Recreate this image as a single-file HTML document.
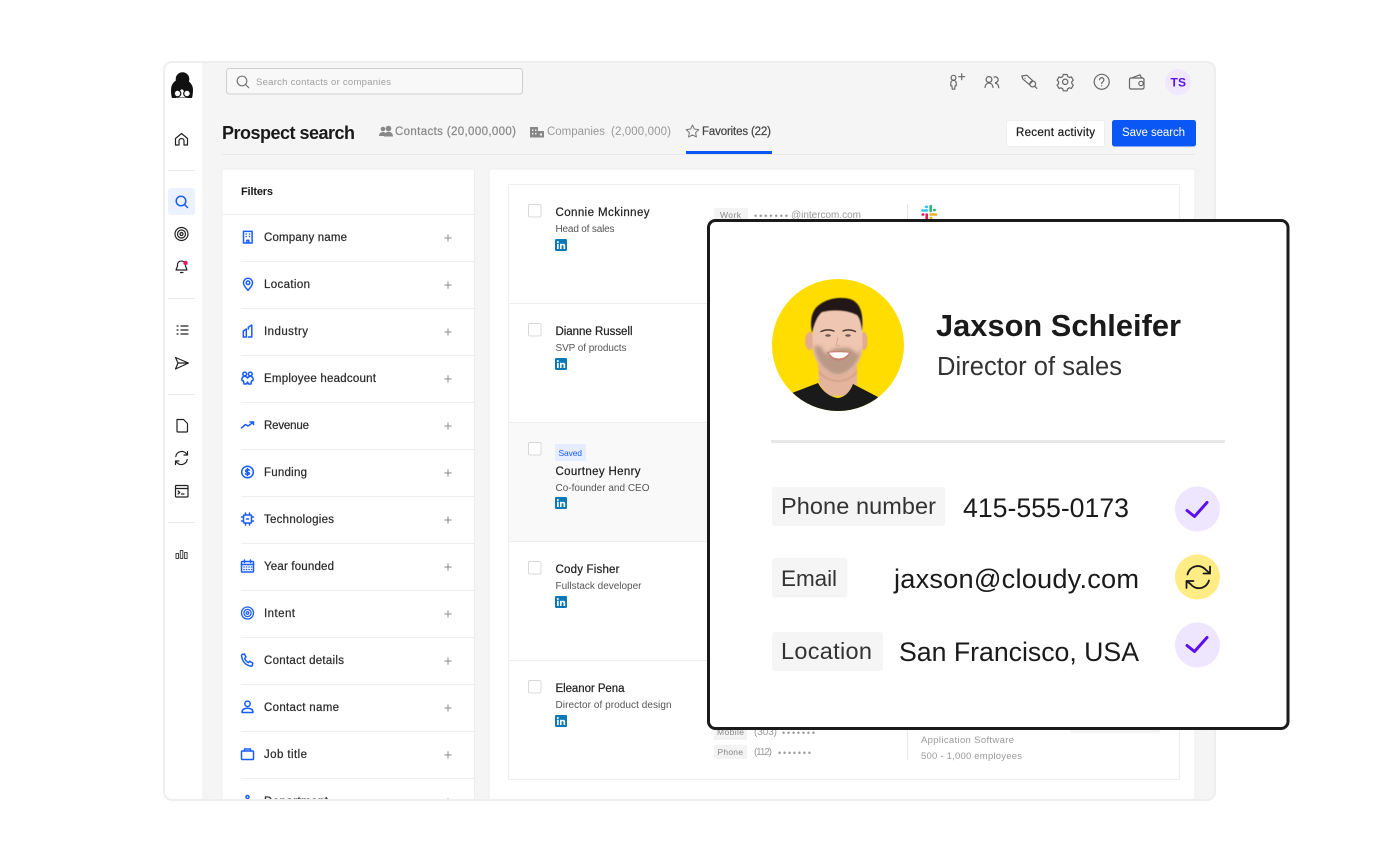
<!DOCTYPE html>
<html lang="en"><head><meta charset="utf-8"><title>Prospect search</title>
<style>
html,body{margin:0;padding:0;background:#fff}
svg{display:block}
text{font-family:"Liberation Sans",sans-serif;white-space:pre}
.m{stroke-width:.22;paint-order:stroke}
.f{font-size:11.5px;fill:#2a2a2a;stroke:#2a2a2a}
.n{font-size:11.5px;fill:#222;stroke:#222}
.s{font-size:10px;fill:#555}
.i{fill:none;stroke:#1a5cff;stroke-width:1.5;stroke-linecap:round;stroke-linejoin:round}
.k{fill:none;stroke:#222;stroke-width:1.2;stroke-linecap:round;stroke-linejoin:round}
.g{fill:none;stroke:#666;stroke-width:1.2;stroke-linecap:round;stroke-linejoin:round}
.p{fill:none;stroke:#888;stroke-width:1;stroke-linecap:round}
.l{font-size:9px;fill:#999}
</style></head><body>
<svg width="1380" height="862" viewBox="0 0 1380 862" xmlns="http://www.w3.org/2000/svg">
<defs>
<clipPath id="frame"><rect x="165" y="63" width="1049" height="736" rx="7"/></clipPath>
<clipPath id="photo"><circle cx="838" cy="345" r="66"/></clipPath>
<filter id="soft" x="-20%" y="-20%" width="140%" height="140%"><feGaussianBlur stdDeviation="1.800"/></filter>
<filter id="soft2" x="-20%" y="-20%" width="140%" height="140%"><feGaussianBlur stdDeviation=".5"/></filter>
<g id="li"><rect width="12" height="12" rx="1.2" fill="#0a78b5"/><rect x="2" y="4.8" width="1.7" height="5.2" fill="#fff"/><circle cx="2.85" cy="3" r="1" fill="#fff"/><path d="M5 4.8h1.6v.8c.4-.6 1-.9 1.7-.9 1.3 0 1.9.8 1.9 2.2V10H8.500V7.300c0-.7-.2-1.200-.9-1.200-.7 0-1 .5-1 1.200V10H5z" fill="#fff"/></g>
<path id="plus" d="M-3.200 0H3.200M0-3.200V3.200" class="p"/>
</defs>

<rect x="163" y="61" width="1053" height="740" rx="9" fill="#eeeeee"/>
<g clip-path="url(#frame)">
<rect x="165" y="63" width="1049" height="736" fill="#f5f5f5"/>
<rect x="165" y="63" width="37" height="736" fill="#fff"/>

<!-- logo -->
<g>
<circle cx="182.500" cy="79" r="6.800" fill="#111"/>
<path d="M171 90c0-7 5-11 10.500-11S193 83 193 90c0 3-.5 6-1 8H172C171.300 96 171 93 171 90z" fill="#111"/>
<path d="M176 92.500c2-.5 4-1.800 6-3.500 1.500 1.800 3 3 5.500 3.500v5h-11.500z" fill="#fff"/>
<circle cx="177.500" cy="93.500" r="3.300" fill="#fff" stroke="#111" stroke-width="1.200"/>
<circle cx="187" cy="93.500" r="3.300" fill="#fff" stroke="#111" stroke-width="1.200"/>
</g>

<!-- sidebar -->
<g fill="#e9e9e9"><rect x="168" y="170" width="27" height="1"/><rect x="168" y="298" width="27" height="1"/><rect x="168" y="394" width="27" height="1"/><rect x="168" y="522" width="27" height="1"/></g>
<path class="k" d="M175.500 138.500l6-5 6 5V145h-3.500v-4a2.500 2.500 0 0 0-5 0v4h-3.500z"/>
<rect x="168" y="188" width="27" height="27" rx="3" fill="#ebf1ff"/>
<g class="i"><circle cx="181" cy="201" r="4.800"/><path d="M184.500 204.500l3 3"/></g>
<g class="k"><circle cx="181.500" cy="234" r="6.500"/><circle cx="181.500" cy="234" r="4"/><circle cx="181.500" cy="234" r="1.500"/></g>
<path class="k" d="M177.500 266v-2a4.200 4.200 0 0 1 8 0v2l1.500 4h-11zM180.500 272.500h2.500"/>
<circle cx="185.500" cy="263" r="2.200" fill="#f0145a"/>
<path class="k" d="M177 326h1M177 330h1M177 334h1M181 326h7M181 330h7M181 334h7"/>
<path class="k" d="M175.500 357.500l13 5.500-13 6 2.500-6zM178 363h10"/>
<path class="k" d="M177 419.500h6.500l4 4V431a1 1 0 0 1-1 1H178a1 1 0 0 1-1-1z"/>
<path class="k" d="M175.800 456.500a6 6 0 0 1 10.400-3l1.300 1.500M187.500 451.500v3.500H184M187.200 459.500a6 6 0 0 1-10.400 3l-1.300-1.500M175.500 464.500V461H179"/>
<g class="k"><rect x="175.500" y="485.500" width="12.500" height="11.500" rx="1"/><path d="M175.500 488.500h12.500M178 491l1.800 1.500-1.800 1.500M181.500 494h2.500"/></g>
<g class="k" style="stroke-width:1;stroke:#444"><rect x="176" y="553.500" width="2.500" height="5"/><rect x="180.300" y="550.500" width="2.500" height="8"/><rect x="184.600" y="552.500" width="2.500" height="6"/></g>

<!-- search -->
<rect x="226.500" y="68.500" width="296" height="25.500" rx="3" fill="#f8f8f8" stroke="#cfcfcf"/>
<g class="g" style="stroke:#777"><circle cx="242" cy="81" r="4.800"/><path d="M245.500 84.500l3.200 3.200"/></g>
<text x="256" y="85" font-size="9.500" fill="#a0a0a0" textLength="135" lengthAdjust="spacing">Search contacts or companies</text>

<!-- top icons -->
<g class="g">
<circle cx="953.500" cy="77.700" r="2.400"/><path d="M950.800 83c0-1.500 1.100-2.600 2.700-2.600s2.700 1.100 2.700 2.600v2.800h-1.100l-.4 3.400h-2.400l-.4-3.400h-1.100z"/>
<path d="M961.700 73.700v6M958.700 76.700h6"/>
<circle cx="989" cy="79.500" r="2.900"/><path d="M985 87.500c.3-3 2-4.500 4-4.500s3.700 1.500 4 4.500"/><path d="M994 76.800a2.900 2.900 0 1 1 1.500 5.500M995.500 83c2 .3 3 2 3.300 4.500" transform="translate(0 .3)"/>
<path d="M1021.800 76l5-.8 6 5.600-3.600 3.600-6.300-5.300zM1025 78.300h.1"/>
<circle cx="1032.700" cy="84" r="2.900"/><path d="M1034.800 86.200l2 2.200"/>
<path d="M1063.300 74.500h3.800l.6 2 1.700 1 2-.6 1.900 3.300-1.500 1.500v1.900l1.500 1.500-1.900 3.300-2-.6-1.700 1-.6 2h-3.800l-.6-2-1.700-1-2 .6-1.900-3.300 1.500-1.500v-1.900l-1.500-1.500 1.900-3.300 2 .6 1.700-1z"/><circle cx="1065.200" cy="81.800" r="2.700"/>
<circle cx="1101.700" cy="81.800" r="7.500"/><path d="M1099.500 79.800a2.200 2.200 0 1 1 3.400 1.900c-.8.500-1.200 1-1.200 1.800M1101.700 85.800v.1"/>
<path d="M1131.500 78l8.500-3.200 1.600 3.200"/><rect x="1129.500" y="78" width="14.500" height="11" rx="1.500"/><circle cx="1141" cy="83.500" r="2.200"/>
</g>
<circle cx="1178" cy="82" r="13" fill="#efe8ff"/>
<text x="1170.500" y="86.500" font-size="12" font-weight="700" fill="#5b12f0" textLength="15.500" lengthAdjust="spacing">TS</text>

<!-- header -->
<text x="222" y="139" font-size="18" font-weight="700" fill="#1a1a1a" textLength="133" lengthAdjust="spacing">Prospect search</text>
<g fill="#888"><circle cx="383" cy="129" r="2.300"/><path d="M379 136c0-2.500 1.500-4 4-4 1 0 1.700.3 2.200.8V136z"/><circle cx="388.500" cy="128.500" r="2.800"/><path d="M384 136.500c0-3 2-4.800 4.500-4.800s4.500 1.800 4.500 4.800z"/></g>
<text class="m" x="395" y="135" font-size="11.500" fill="#888" stroke="#888" textLength="121" lengthAdjust="spacing">Contacts (20,000,000)</text>
<g fill="#888"><rect x="530" y="127" width="8" height="10.500"/><rect x="538" y="131" width="6" height="6.500"/></g><g fill="#f5f5f5"><rect x="532" y="129.500" width="1.400" height="1.400"/><rect x="535" y="129.500" width="1.400" height="1.400"/><rect x="532" y="133" width="1.400" height="1.400"/><rect x="535" y="133" width="1.400" height="1.400"/><rect x="540" y="133.500" width="2" height="2"/></g>
<text x="547" y="135" font-size="11.500" fill="#999" textLength="58" lengthAdjust="spacing">Companies</text>
<text x="611" y="135" font-size="11.500" fill="#999" textLength="60" lengthAdjust="spacing">(2,000,000)</text>
<path d="M692.500 125l1.900 4 4.400.6-3.200 3 .8 4.400-3.900-2.100-3.900 2.100.8-4.400-3.200-3 4.400-.6z" fill="none" stroke="#777" stroke-width="1" stroke-linejoin="round"/>
<text class="m" x="702" y="135" font-size="11.500" fill="#444" stroke="#444" textLength="69" lengthAdjust="spacing">Favorites (22)</text>
<rect x="222" y="154" width="973" height="1" fill="#e8e8e8"/>
<rect x="686" y="151" width="86" height="3" fill="#0a57f5"/>
<rect x="1006.500" y="120.500" width="98" height="26" rx="2" fill="#fff" stroke="#efefef"/>
<text class="m" x="1016" y="136" font-size="11.500" fill="#1a1a1a" stroke="#1a1a1a" textLength="79" lengthAdjust="spacing">Recent activity</text>
<rect x="1112" y="120" width="84" height="26.500" rx="2.500" fill="#0a57f5"/>
<text x="1122" y="136" font-size="11.500" fill="#fff" textLength="63" lengthAdjust="spacing">Save search</text>

<!-- filters panel -->
<rect x="222" y="169" width="252.500" height="640" rx="2" fill="#fff" stroke="#eee" stroke-width="1"/>
<text class="m" x="241" y="195" font-size="11" font-weight="700" fill="#1a1a1a" textLength="32" lengthAdjust="spacing">Filters</text>
<rect x="222" y="214" width="252" height="1" fill="#eee"/>
<g fill="#eee">
<rect x="241" y="261" width="233" height="1"/><rect x="241" y="308" width="233" height="1"/><rect x="241" y="355" width="233" height="1"/><rect x="241" y="402" width="233" height="1"/><rect x="241" y="449" width="233" height="1"/><rect x="241" y="496" width="233" height="1"/><rect x="241" y="543" width="233" height="1"/><rect x="241" y="590" width="233" height="1"/><rect x="241" y="637" width="233" height="1"/><rect x="241" y="684" width="233" height="1"/><rect x="241" y="731" width="233" height="1"/><rect x="241" y="778" width="233" height="1"/>
</g>
<g class="m">
<text class="f" x="264" y="241" textLength="83" lengthAdjust="spacing">Company name</text>
<text class="f" x="264" y="288" textLength="46" lengthAdjust="spacing">Location</text>
<text class="f" x="264" y="335" textLength="44" lengthAdjust="spacing">Industry</text>
<text class="f" x="264" y="382" textLength="112" lengthAdjust="spacing">Employee headcount</text>
<text class="f" x="264" y="429" textLength="45" lengthAdjust="spacing">Revenue</text>
<text class="f" x="264" y="476" textLength="43" lengthAdjust="spacing">Funding</text>
<text class="f" x="264" y="523" textLength="70" lengthAdjust="spacing">Technologies</text>
<text class="f" x="264" y="570" textLength="70" lengthAdjust="spacing">Year founded</text>
<text class="f" x="264" y="617" textLength="31" lengthAdjust="spacing">Intent</text>
<text class="f" x="264" y="664" textLength="80" lengthAdjust="spacing">Contact details</text>
<text class="f" x="264" y="711" textLength="75" lengthAdjust="spacing">Contact name</text>
<text class="f" x="264" y="758" textLength="43" lengthAdjust="spacing">Job title</text>
<text class="f" x="264" y="805" textLength="64" lengthAdjust="spacing">Department</text>
</g>
<use href="#plus" x="448" y="238"/><use href="#plus" x="448" y="285"/><use href="#plus" x="448" y="332"/><use href="#plus" x="448" y="379"/><use href="#plus" x="448" y="426"/><use href="#plus" x="448" y="473"/><use href="#plus" x="448" y="520"/><use href="#plus" x="448" y="567"/><use href="#plus" x="448" y="614"/><use href="#plus" x="448" y="661"/><use href="#plus" x="448" y="708"/><use href="#plus" x="448" y="755"/><use href="#plus" x="448" y="802"/>

<!-- filter icons -->
<g class="i">
<g transform="translate(247.800 237.200)"><rect x="-4.300" y="-5.800" width="8.600" height="11.600"/><path d="M-1.700-3.200h.1M1.700-3.200h.1M-1.700-.7h.1M1.700-.7h.1M-1 5.500V3H1V5.500"/></g>
<g transform="translate(248 284)"><path d="M0 6.300C-3 3.300-4.500 1-4.500-1.200a4.500 4.500 0 0 1 9 0C4.500 1 3 3.300 0 6.300z"/><circle cy="-1.200" r="1.800"/></g>
<g transform="translate(247.800 331)"><path d="M-4.500 6V0L-1.500-2V6zM.5 6h3.500V-6L.5-3.700V-2"/></g>
<g transform="translate(247.500 378)"><circle cx="-2.800" cy="-4" r="1.900"/><circle cx="2.800" cy="-4" r="1.900"/><path d="M-5.500 2.500c-.5-2 .5-4.200 2.700-4.200 1.200 0 2 .6 2.800 1.700.8-1.100 1.600-1.700 2.800-1.700 2.200 0 3.200 2.200 2.700 4.200L4 3 3.500 6H1L0 4-1 6H-3.500L-4 3z"/></g>
<g transform="translate(247.500 425)"><path d="M-6 3l4-3.500L.5 1 5.500-2.500M2.500-3H6V-.5"/></g>
<g transform="translate(247.500 472)"><circle r="5.800"/><path d="M1.800-1.800C1.300-2.700-1.800-2.800-1.800-1S1.900.1 1.900 1.400-1.400 2.700-2 1.600M0-3.500V3.500"/></g>
<g transform="translate(247.500 519)"><rect x="-4" y="-4" width="8" height="8" rx="1"/><path d="M-2-6v2M2-6v2M-2 4v2M2 4v2M-6-2h2M-6 2h2M4-2h2M4 2h2M-1 0h2"/></g>
<g transform="translate(247.500 566)"><rect x="-6" y="-4.500" width="12" height="10.500" rx=".8"/><path d="M-6-1.500H6M-3-6v2.500M3-6v2.500M-3.500 1h.1M-1 1h.1M1.500 1h.1M4 1h.1M-3.500 3.500h.1M-1 3.500h.1M1.500 3.500h.1M4 3.500h.1"/></g>
<g transform="translate(247.500 613)" style="stroke-width:1.300"><circle r="6"/><circle r="3.600"/><circle r="1.300"/></g>
<g transform="translate(247.500 660)"><path d="M-5.500-5.500l2.300-.5 1.700 3-1.400 1.500c.8 1.800 2.200 3.200 4 4.100L2.100 1.300l3.200 1.700-.5 2.500c-.2.500-.6.700-1.200.6C-1.600 5.400-5.400 1.600-6 -4.400c0-.5.100-.9.500-1.100z"/></g>
<g transform="translate(247.500 707)"><circle cy="-3.200" r="2.700"/><path d="M-5.500 5.500c0-3 2.300-4.300 5.500-4.300S5.500 2.500 5.500 5.500z"/></g>
<g transform="translate(247.500 754)"><rect x="-6" y="-3" width="12" height="8.500" rx=".8"/><path d="M-3-3v-2h6v2"/></g>
<g transform="translate(247.500 801)"><circle cy="-4" r="1.500"/><path d="M-2-1h4v6h-4z"/></g>
</g>

<!-- results panel -->
<rect x="489" y="169" width="706" height="640" rx="2" fill="#fff" stroke="#eee" stroke-width="1"/>
<rect x="508.500" y="184.500" width="671" height="595" fill="#fff" stroke="#eeeeee"/>
<rect x="509" y="423" width="670" height="118" fill="#f9f9f9"/>
<g fill="#eee"><rect x="509" y="303" width="670" height="1"/><rect x="509" y="422" width="670" height="1"/><rect x="509" y="541" width="670" height="1"/><rect x="509" y="660" width="670" height="1"/></g>
<g fill="#fff" stroke="#d8d8d8"><rect x="528.500" y="204.500" width="12.500" height="12.500" rx="1.500"/><rect x="528.500" y="323.500" width="12.500" height="12.500" rx="1.500"/><rect x="528.500" y="442.500" width="12.500" height="12.500" rx="1.500"/><rect x="528.500" y="561.500" width="12.500" height="12.500" rx="1.500"/><rect x="528.500" y="680.500" width="12.500" height="12.500" rx="1.500"/></g>
<g class="m">
<text class="n" x="555.500" y="216" textLength="94" lengthAdjust="spacing">Connie Mckinney</text>
<text class="n" x="555.500" y="335" textLength="77" lengthAdjust="spacing">Dianne Russell</text>
<text class="n" x="555.500" y="475" textLength="85" lengthAdjust="spacing">Courtney Henry</text>
<text class="n" x="555.500" y="573" textLength="64" lengthAdjust="spacing">Cody Fisher</text>
<text class="n" x="555.500" y="692" textLength="69" lengthAdjust="spacing">Eleanor Pena</text>
</g>
<text class="s" x="555.500" y="232" textLength="59" lengthAdjust="spacing">Head of sales</text>
<text class="s" x="555.500" y="351" textLength="71" lengthAdjust="spacing">SVP of products</text>
<text class="s" x="555.500" y="491" textLength="94" lengthAdjust="spacing">Co-founder and CEO</text>
<text class="s" x="555.500" y="589" textLength="86" lengthAdjust="spacing">Fullstack developer</text>
<text class="s" x="555.500" y="708" textLength="116" lengthAdjust="spacing">Director of product design</text>
<use href="#li" x="555" y="239"/><use href="#li" x="555" y="358"/><use href="#li" x="555" y="497"/><use href="#li" x="555" y="596"/><use href="#li" x="555" y="715"/>
<rect x="555" y="444" width="31" height="17" rx="1.500" fill="#e6edff"/>
<text x="558.500" y="456" font-size="8.500" fill="#1a5cff" textLength="23.500" lengthAdjust="spacing">Saved</text>

<rect x="714" y="208" width="34" height="14" rx="1.500" fill="#f3f3f3"/>
<text x="720" y="218" font-size="8.500" fill="#888" textLength="21" lengthAdjust="spacing">Work</text>
<text class="l" x="754" y="219" textLength="34" lengthAdjust="spacing" fill="#aaa">•••••••</text>
<text x="791" y="218" font-size="10" fill="#999" textLength="70" lengthAdjust="spacing">@intercom.com</text>
<rect x="907" y="204" width="1" height="18" fill="#e6e6e6"/>
<g fill="none" stroke-width="2.600" stroke-linecap="round">
<path d="M922.500 210.500h4.500" stroke="#36c5f0"/><path d="M926 206.800h.8" stroke="#36c5f0"/>
<path d="M930.700 206v5" stroke="#2eb67d"/><path d="M934.200 210h.5" stroke="#2eb67d"/>
<path d="M930.500 214.500h5.500" stroke="#ecb22e"/><path d="M930.800 218h.3" stroke="#ecb22e"/>
<path d="M926.700 214.500v4" stroke="#e01e5a"/><path d="M922.700 214.500h.5" stroke="#e01e5a"/>
</g>

<rect x="714" y="726" width="33" height="14" rx="1.500" fill="#f3f3f3"/>
<text x="717" y="735" font-size="8.500" fill="#888" textLength="27" lengthAdjust="spacing">Mobile</text>
<text x="754" y="735" font-size="10" fill="#999" textLength="23" lengthAdjust="spacing">(303)</text>
<text class="l" x="782" y="736" textLength="33" lengthAdjust="spacing" fill="#aaa">•••••••</text>
<rect x="714" y="745" width="33" height="14" rx="1.500" fill="#f3f3f3"/>
<text x="717.500" y="755" font-size="8.500" fill="#888" textLength="25.500" lengthAdjust="spacing">Phone</text>
<text x="754" y="755" font-size="10" fill="#999" textLength="18" lengthAdjust="spacing">(112)</text>
<text class="l" x="778" y="756" textLength="33" lengthAdjust="spacing" fill="#aaa">•••••••</text>
<rect x="907" y="725" width="1" height="35" fill="#e6e6e6"/>
<text x="921" y="743" font-size="9.500" fill="#999" textLength="93" lengthAdjust="spacing">Application Software</text>
<text x="921" y="759" font-size="9.500" fill="#999" textLength="101" lengthAdjust="spacing">500 - 1,000 employees</text>
<rect x="1070" y="725" width="90" height="8" rx="1.500" fill="#f5f5f5"/>
</g>

<!-- popup -->
<rect x="708.500" y="220.500" width="579.500" height="508" rx="7" fill="#fff" stroke="#1a1a1a" stroke-width="3"/>

<g clip-path="url(#photo)">
<rect x="772" y="279" width="132" height="132" fill="#ffdd00"/>
<g filter="url(#soft2)">
<path d="M818 358L819 384 828 396H848L857 384 857 358z" fill="#e4b49c"/>
<path d="M819 370c6 7 12 10 19 10s13-3 19-10v4c-5 5-12 8-19 8s-14-3-19-8z" fill="#cf9a82" opacity=".6"/>
<ellipse cx="809.500" cy="341" rx="4.300" ry="9" fill="#e2ab92"/>
<ellipse cx="864" cy="341" rx="3.500" ry="9" fill="#e2ab92"/>
<path d="M812.500 322C812.500 306 825 301 838 301S862.500 306 862.500 322V346C862.500 354 860 362 854 368 849 373 843 376 838 376S827 373 822 368C816 362 812.500 354 812.500 346z" fill="#eec6b1"/>
</g>
<g filter="url(#soft)">
<path d="M814 346c1 8 4 15 8 20 5 5 11 9 16 9s11-4 16-9c4-5 7-12 8-20-1 4-3 7-5 8-3-3-6-6-10-6-3 0-6 0-9 0-4 0-8 3-11 6-3-2-5-4-6-8z" fill="#75594b" opacity=".42"/>
</g>
<path d="M812 333c-2-12-1-22 7-28 7-6 20-9 31-6 9 3 14 12 12 32-1-8-2-13-5-16-9-5-24-6-35-3-5 4-8 12-10 21z" fill="#211613" filter="url(#soft2)"/>
<path d="M792 393L818 383C823 392 830 397 838 398 845 397 850 392 853 384L878 397 890 420H780z" fill="#1a1a1a"/>
<path d="M821 331.500q6-3 13-.5M843 331q6-2.500 12.500.5" stroke="#4a382e" stroke-width="1.400" fill="none" stroke-linecap="round"/>
<ellipse cx="828" cy="335.500" rx="2.800" ry="1.200" fill="#6a5a50"/>
<ellipse cx="848" cy="335.500" rx="2.800" ry="1.200" fill="#6a5a50"/>
<path d="M838 337l-1.800 8c1 1 2.500 1 3.600 0" stroke="#d9a890" stroke-width="1" fill="none"/>
<path d="M827 352Q838 350 850.500 352 847 360.500 838.500 360.500 830.500 360.500 827 352z" fill="#c98070"/>
<path d="M829 352.800Q838 351.800 849 352.800 845.500 358.500 838.500 358.500 832 358.500 829 352.800z" fill="#fff"/>
</g>

<text x="936" y="336" font-size="30.800" font-weight="700" fill="#1a1a1a" textLength="245" lengthAdjust="spacing">Jaxson Schleifer</text>
<text x="937" y="375" font-size="25.500" fill="#333" textLength="185" lengthAdjust="spacing">Director of sales</text>
<rect x="771" y="440" width="454" height="3" fill="#e8e8e8"/>

<rect x="772" y="487" width="173" height="39" rx="3" fill="#f5f5f5"/>
<text x="781" y="514" font-size="23.500" fill="#333" textLength="155" lengthAdjust="spacing">Phone number</text>
<text x="963" y="517" font-size="26.700" fill="#1a1a1a" textLength="166" lengthAdjust="spacing">415-555-0173</text>
<rect x="772" y="558" width="75.500" height="39.500" rx="3" fill="#f5f5f5"/>
<text x="781" y="586" font-size="22.500" fill="#333" textLength="56" lengthAdjust="spacing">Email</text>
<text x="894" y="588" font-size="27.200" fill="#1a1a1a" textLength="245" lengthAdjust="spacing">jaxson@cloudy.com</text>
<rect x="772" y="632" width="111" height="39" rx="3" fill="#f5f5f5"/>
<text x="781" y="659" font-size="23.500" fill="#333" textLength="91" lengthAdjust="spacing">Location</text>
<text x="899" y="661" font-size="26.700" fill="#1a1a1a" textLength="240" lengthAdjust="spacing">San Francisco, USA</text>

<circle cx="1197.500" cy="509" r="22.500" fill="#eee6ff"/>
<path d="M1187 510.500l7.500 6 12.500-14" fill="none" stroke="#5b0ff0" stroke-width="3" stroke-linecap="round" stroke-linejoin="round"/>
<circle cx="1197.500" cy="577" r="22.500" fill="#ffec85"/>
<path d="M1187.500 574.500a10.500 10.500 0 0 1 18.500-4.500l4 3.500M1210 566.500v7h-6.500M1209 580.500a10.500 10.500 0 0 1-18.500 3.500l-4-3M1186.500 588v-7h7" fill="none" stroke="#1a1a1a" stroke-width="1.800" stroke-linecap="round" stroke-linejoin="round"/>
<circle cx="1197.500" cy="645" r="22.500" fill="#eee6ff"/>
<path d="M1187 645.500l7.500 6 12.500-14" fill="none" stroke="#5b0ff0" stroke-width="3" stroke-linecap="round" stroke-linejoin="round"/>
</svg>
</body></html>
